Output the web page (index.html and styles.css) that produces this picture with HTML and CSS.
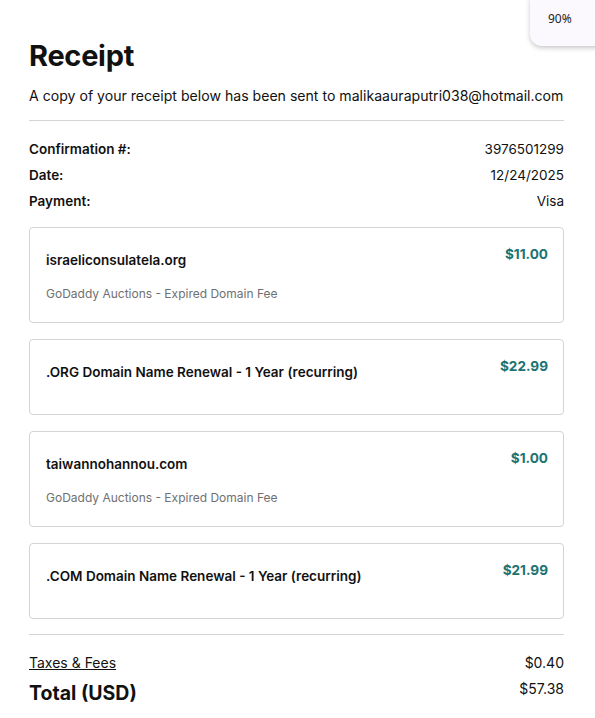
FILE: index.html
```html
<!DOCTYPE html>
<html>
<head>
<meta charset="utf-8">
<link rel="stylesheet" href="styles.css">
</head>
<body>
<div class="zoom-pop">90%</div>
<main class="receipt">
  <h1 class="title">Receipt</h1>
  <p class="sent">A copy of your receipt below has been sent to malikaauraputri038@hotmail.com</p>
  <hr class="divider">
  <div class="meta">
    <div class="meta-row"><span class="label">Confirmation #:</span><span>3976501299</span></div>
    <div class="meta-row"><span class="label">Date:</span><span>12/24/2025</span></div>
    <div class="meta-row"><span class="label">Payment:</span><span>Visa</span></div>
  </div>
  <div class="items">
    <div class="card">
      <div class="card-main">
        <div class="item-name">israeliconsulatela.org</div>
        <div class="item-desc">GoDaddy Auctions - Expired Domain Fee</div>
      </div>
      <div class="price">$11.00</div>
    </div>
    <div class="card card-short">
      <div class="card-main">
        <div class="item-name">.ORG Domain Name Renewal - 1 Year (recurring)</div>
      </div>
      <div class="price">$22.99</div>
    </div>
    <div class="card">
      <div class="card-main">
        <div class="item-name">taiwannohannou.com</div>
        <div class="item-desc">GoDaddy Auctions - Expired Domain Fee</div>
      </div>
      <div class="price">$1.00</div>
    </div>
    <div class="card card-short">
      <div class="card-main">
        <div class="item-name">.COM Domain Name Renewal - 1 Year (recurring)</div>
      </div>
      <div class="price">$21.99</div>
    </div>
  </div>
  <hr class="divider divider-bottom">
  <div class="totals">
    <div class="tax-row"><a class="tax-link">Taxes &amp; Fees</a><span>$0.40</span></div>
    <div class="total-row"><span class="total-label">Total (USD)</span><span class="total-value">$57.38</span></div>
  </div>
</main>
</body>
</html>
```
FILE: styles.css
```css
* { box-sizing: border-box; }
html, body { margin: 0; padding: 0; background: #fff; }
body {
  font-family: Inter, "Noto Sans", sans-serif;
  color: #111;
  position: relative;
  overflow: hidden;
  height: 718px;
}
.zoom-pop {
  position: absolute;
  top: -10px;
  right: -20px;
  width: 85px;
  height: 56px;
  padding: 20px 0 0 18px;
  background: #fbf9fd;
  border-radius: 12px;
  box-shadow: 0 2px 5px rgba(0,0,0,0.22);
  font-family: "Noto Sans", sans-serif;
  font-size: 12px;
  color: #222;
  z-index: 5;
}
.receipt {
  padding: 38px 31px 0 29px;
}
.title {
  margin: 0;
  font-size: 29px;
  font-weight: 700;
  line-height: 36px;
  letter-spacing: -0.3px;
}
.sent {
  margin: 12px 0 0;
  font-size: 14.1px;
  line-height: 20px;
}
.divider {
  border: 0;
  border-top: 1px solid #d4d4d4;
  margin: 14px 0 0;
}
.meta {
  margin-top: 15px;
  display: flex;
  flex-direction: column;
}
.meta-row {
  display: flex;
  justify-content: space-between;
  font-size: 13.5px;
  line-height: 26px;
}
.label { font-weight: 600; }
.items {
  margin-top: 13px;
  display: flex;
  flex-direction: column;
  gap: 16px;
}
.card {
  display: flex;
  justify-content: space-between;
  align-items: flex-start;
  border: 1px solid #d4d4d4;
  border-radius: 4px;
  padding: 17px 15px 19px 16px;
  min-height: 96px;
}
.card-short { min-height: 76px; }
.item-name {
  font-size: 13.5px;
  font-weight: 600;
  line-height: 30px;
}
.item-desc {
  margin-top: 10px;
  font-size: 12px;
  line-height: 18px;
  color: #707070;
}
.price {
  font-size: 13.6px;
  font-weight: 700;
  line-height: 18px;
  color: #1b7373;
}
.divider-bottom { margin-top: 15px; }
.totals { margin-top: 17px; }
.tax-row {
  display: flex;
  justify-content: space-between;
  font-size: 14px;
  line-height: 22px;
}
.tax-link { text-decoration: underline; color: #111; }
.total-row {
  display: flex;
  justify-content: space-between;
  align-items: flex-start;
  margin-top: 4px;
}
.total-label {
  font-size: 19.5px;
  font-weight: 700;
  line-height: 30px;
}
.total-value {
  font-size: 14px;
  line-height: 22px;
}
```
